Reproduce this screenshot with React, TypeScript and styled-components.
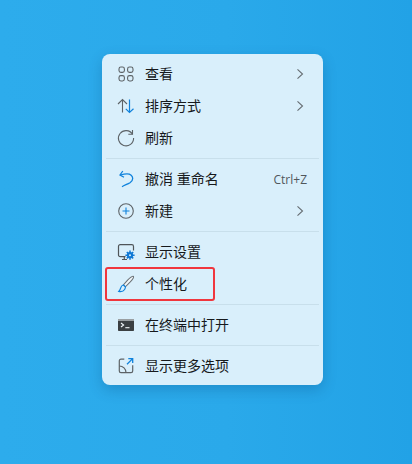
import React from 'react';
import styled, { createGlobalStyle } from 'styled-components';

const GlobalStyle = createGlobalStyle`
  html, body {
    margin: 0;
    padding: 0;
    height: 100%;
  }
  #root {
    height: 100%;
  }
`;

const Desktop = styled.div`
  width: 412px;
  height: 464px;
  box-sizing: border-box;
  padding: 54px 0 0 102px;
  background: linear-gradient(90deg, #2dacec 0%, #2aa9ea 55%, #22a2e6 100%);
  font-family: "Noto Sans CJK SC", "Liberation Sans", sans-serif;
  overflow: hidden;
`;

const Menu = styled.div`
  width: 221px;
  height: 331px;
  box-sizing: border-box;
  padding: 4px 0 3px;
  border-radius: 8px;
  background: #d9effb;
  box-shadow: 0 5px 14px rgba(0, 60, 110, 0.24);
`;

const Row = styled.div<{ $marked?: boolean }>`
  position: relative;
  height: 32px;
  display: flex;
  align-items: center;
  padding: 0 16px;
  color: #16191c;
  font-size: 14px;

  ${(p) =>
    p.$marked &&
    `
    &::after {
      content: '';
      position: absolute;
      left: 3px;
      top: -1px;
      width: 110px;
      height: 34px;
      box-sizing: border-box;
      border: 2px solid #f0363d;
      border-radius: 3px;
    }
  `}
`;

const IconSlot = styled.span`
  width: 16px;
  height: 16px;
  flex: none;
  margin-right: 11px;
  display: flex;
`;

const Label = styled.span`
  flex: 1;
  padding-bottom: 2px;
  white-space: pre;
  word-spacing: 0.7px;
`;

const Shortcut = styled.span`
  font-family: "Open Sans", "Liberation Sans", sans-serif;
  font-size: 12px;
  color: #50575c;
`;

const ChevronSlot = styled.span`
  display: flex;
  margin-right: -1px;
`;

const Divider = styled.div`
  height: 1px;
  margin: 4px 4px;
  background: #c8dfeb;
`;

const Chevron = () => (
  <ChevronSlot>
    <svg width="16" height="16" viewBox="0 0 16 16" fill="none" stroke="#666d72" strokeWidth="1.1">
      <path d="M5.5 3.3 10.5 8 5.5 12.7" />
    </svg>
  </ChevronSlot>
);

const Svg: React.FC<{ children: React.ReactNode }> = ({ children }) => (
  <svg width="16" height="16" viewBox="0 0 16 16" fill="none" style={{ overflow: 'visible' }}>
    {children}
  </svg>
);

const GridIcon = () => (
  <Svg>
    <g stroke="#5d6367" strokeWidth="1.1">
      <rect x="1" y="1" width="5.4" height="5.4" rx="1.9" />
      <rect x="9.6" y="1" width="5.4" height="5.4" rx="1.9" />
      <rect x="1" y="9.6" width="5.4" height="5.4" rx="1.9" />
      <rect x="9.6" y="9.6" width="5.4" height="5.4" rx="1.9" />
    </g>
  </Svg>
);

const SortIcon = () => (
  <Svg>
    <path d="M4.5 14.5V1.5M0 6 4.5 1.5 9 6" stroke="#5d6367" strokeWidth="1.1" />
    <path d="M11.5 1.5V14.5M7.8 10.8 11.5 14.5 15.5 10.8" stroke="#0f82dc" strokeWidth="1.2" />
  </Svg>
);

const RefreshIcon = () => (
  <Svg>
    <path d="M14.5 4.3A7.6 7.6 0 1 0 15.6 8" stroke="#5d6367" strokeWidth="1.1" />
    <path d="M14.5 0V4.3H10.3" stroke="#5d6367" strokeWidth="1.1" />
  </Svg>
);

const UndoIcon = () => (
  <Svg>
    <path
      d="M2.2 4C5 3.2 7 2.8 9 2.8 12.5 2.8 14.7 4.8 14.7 7.5 14.7 9.5 13.5 10.7 12 11.7 9.5 13.2 6.5 14.2 4 15.7"
      stroke="#0f82dc"
      strokeWidth="1.3"
    />
    <path d="M4.8 0 2 4 6 6.2" stroke="#0f82dc" strokeWidth="1.3" />
  </Svg>
);

const PlusIcon = () => (
  <Svg>
    <circle cx="8" cy="8" r="7.3" stroke="#5d6367" strokeWidth="1.1" />
    <path d="M8 4.5v7M4.5 8h7" stroke="#0f82dc" strokeWidth="1.1" />
  </Svg>
);

const DisplayIcon = () => (
  <Svg>
    <path
      d="M7.5 12.6H2.2A1.7 1.7 0 0 1 0.5 10.9V2.4A1.7 1.7 0 0 1 2.2 0.7H13.8A1.7 1.7 0 0 1 15.5 2.4V6.5"
      stroke="#4f5559"
      strokeWidth="1.2"
    />
    <path d="M6.3 12.6V15.5M4 15.5H9" stroke="#4f5559" strokeWidth="1.2" />
    <circle cx="12" cy="11.2" r="3.1" fill="#0f78d4" />
    <path d="M12 6.6v9.2M7.4 11.2h9.2M8.8 8l6.4 6.4M15.2 8l-6.4 6.4" stroke="#0f78d4" strokeWidth="1.5" />
    <circle cx="12" cy="11.2" r="1" fill="#d9effb" />
  </Svg>
);

const BrushIcon = () => (
  <Svg>
    <path d="M15.5 0.4C15.8 1 14.5 3.5 12 6.2L7.4 10.8 5.4 8.9 9.6 4.2C12 1.8 14.8 0 15.5 0.4Z" fill="#f2f8fb" stroke="#6d7378" strokeWidth="1.1" />
    <path
      d="M5.3 9C3.5 9.4 3 10.6 2.6 12.2 2.3 13.6 1.6 14.6 0.8 15.5 3 15.9 5.5 15.3 6.6 13.5 7.2 12.5 7.5 11.6 7.4 10.9Z"
      fill="#d9effb"
      stroke="#0f82dc"
      strokeWidth="1.2"
    />
  </Svg>
);

const TerminalIcon = () => (
  <Svg>
    <rect x="0" y="2" width="16" height="12" rx="0.8" fill="#3a3f42" />
    <rect x="0" y="2" width="16" height="2" fill="#9a9fa2" />
    <path d="M3 6 5.6 8 3 10" stroke="#f2f8fb" strokeWidth="1.1" />
    <path d="M7.3 10.7H11.5" stroke="#f2f8fb" strokeWidth="1.1" />
  </Svg>
);

const MoreIcon = () => (
  <Svg>
    <path
      d="M6.3 1.2H3A1.7 1.7 0 0 0 1.3 2.9V13A1.7 1.7 0 0 0 3 14.7H13A1.7 1.7 0 0 0 14.7 13V7.2"
      stroke="#5d6367"
      strokeWidth="1.2"
    />
    <path d="M1.3 8C5 8 8 10.8 8 14.7" stroke="#5d6367" strokeWidth="1.2" />
    <path d="M9 6.2 14.7 0.6M10.3 0.6H14.7V5" stroke="#0f82dc" strokeWidth="1.3" />
  </Svg>
);

const App: React.FC = () => (
  <>
    <GlobalStyle />
    <Desktop>
      <Menu>
        <Row>
          <IconSlot><GridIcon /></IconSlot>
          <Label>查看</Label>
          <Chevron />
        </Row>
        <Row>
          <IconSlot><SortIcon /></IconSlot>
          <Label>排序方式</Label>
          <Chevron />
        </Row>
        <Row>
          <IconSlot><RefreshIcon /></IconSlot>
          <Label>刷新</Label>
        </Row>
        <Divider />
        <Row>
          <IconSlot><UndoIcon /></IconSlot>
          <Label>撤消 重命名</Label>
          <Shortcut>Ctrl+Z</Shortcut>
        </Row>
        <Row>
          <IconSlot><PlusIcon /></IconSlot>
          <Label>新建</Label>
          <Chevron />
        </Row>
        <Divider />
        <Row>
          <IconSlot><DisplayIcon /></IconSlot>
          <Label>显示设置</Label>
        </Row>
        <Row $marked>
          <IconSlot><BrushIcon /></IconSlot>
          <Label>个性化</Label>
        </Row>
        <Divider />
        <Row>
          <IconSlot><TerminalIcon /></IconSlot>
          <Label>在终端中打开</Label>
        </Row>
        <Divider />
        <Row>
          <IconSlot><MoreIcon /></IconSlot>
          <Label>显示更多选项</Label>
        </Row>
      </Menu>
    </Desktop>
  </>
);

export default App;
